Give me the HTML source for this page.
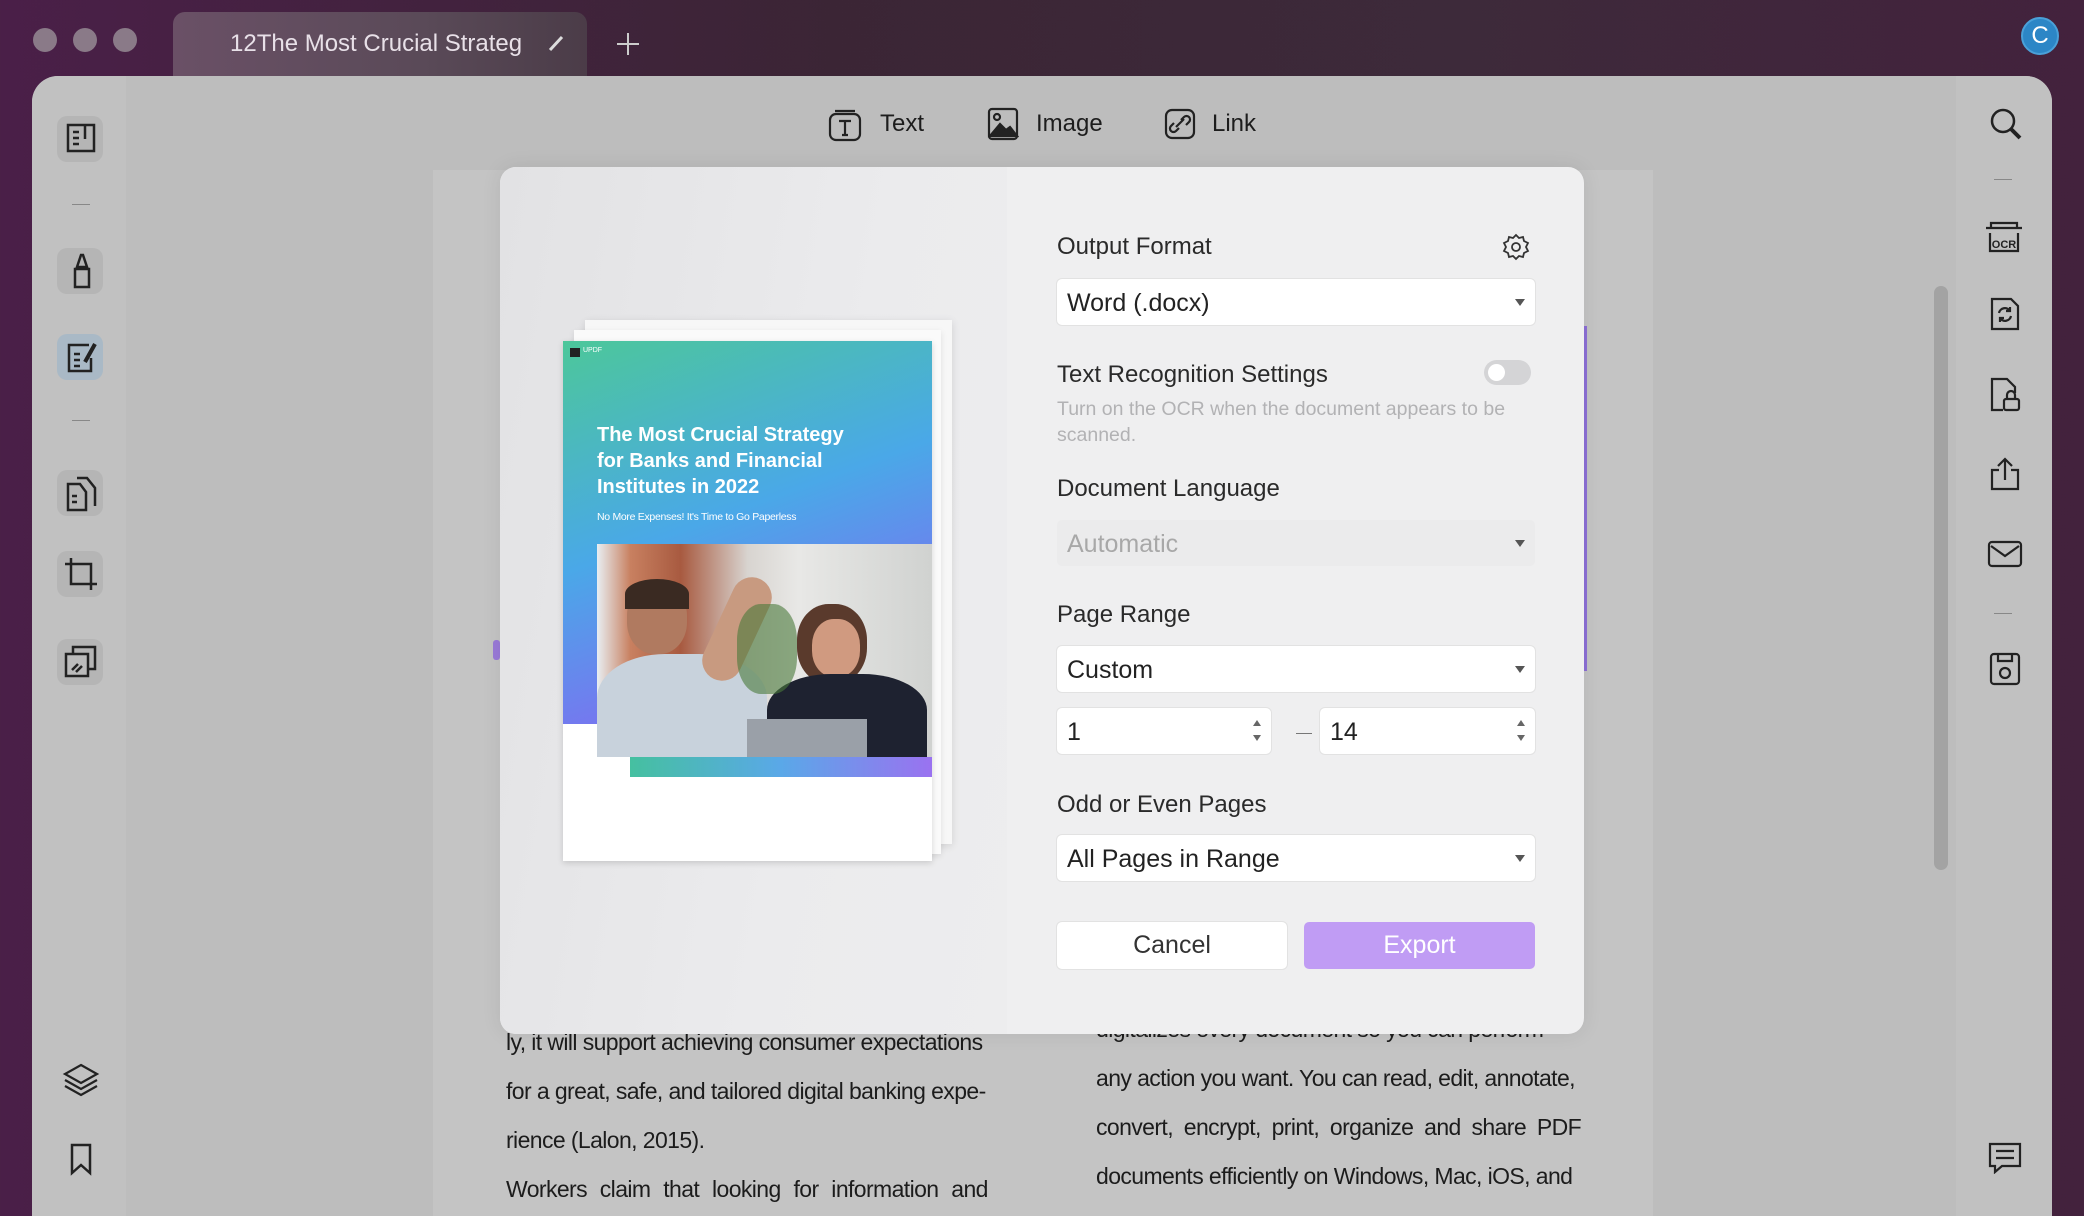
<!DOCTYPE html>
<html><head><meta charset="utf-8"><style>
*{margin:0;padding:0;box-sizing:border-box}
body{width:2084px;height:1208px;overflow:hidden;background:linear-gradient(90deg,#4a1f48 0%,#3b2535 40%,#3d2a3a 70%,#43223d 100%);font-family:"Liberation Sans",sans-serif;position:relative}
.abs{position:absolute}
.dot{position:absolute;top:28px;width:24px;height:24px;border-radius:50%;background:#8a7a88}
.tab{left:173px;top:12px;width:414px;height:66px;border-radius:12px 12px 0 0;background:linear-gradient(90deg,#6a5066,#5a4a58 60%,#4b3c48);}
.main{left:32px;top:76px;width:2020px;height:1140px;border-radius:26px 26px 0 0;background:#bdbdbd;overflow:hidden}
.lsb{left:0;top:0;width:94px;height:1140px;background:#c1c1c1}
.rsb{right:0;top:0;width:96px;height:1140px;background:#c1c1c1}
.ib{position:absolute;width:46px;height:46px;border-radius:10px;background:#b5b5b5}
.dlg{left:500px;top:167px;width:1084px;height:867px;border-radius:16px;background:#efeff0;overflow:hidden;box-shadow:0 0 20px rgba(0,0,0,.08)}
.lab{position:absolute;left:557px;font-size:24px;color:#2a2a2a}
.sel{position:absolute;left:557px;width:478px;height:46px;background:#fff;border-radius:5px;font-size:25px;color:#222;padding:10px 10px;box-shadow:0 0 0 1px #e2e2e2}
.sel:after{content:"";position:absolute;right:10px;top:20px;border:5px solid transparent;border-top:7px solid #555}
.doc{font-size:23px;color:#1c1c1c;position:absolute;letter-spacing:-.6px;white-space:nowrap}
</style></head><body>
<div class="dot" style="left:33px"></div><div class="dot" style="left:73px"></div><div class="dot" style="left:113px"></div>
<div class="abs tab"></div>
<div class="abs" style="left:230px;top:30px;font-size:24px;color:#e8e0e8;width:300px;overflow:hidden;white-space:nowrap">12The Most Crucial Strateg</div>
<svg class="abs" style="left:547px;top:34px" width="18" height="18"><path d="M3 16L15 3" stroke="#ddd" stroke-width="3"/></svg>
<svg class="abs" style="left:616px;top:32px" width="24" height="24"><path d="M12 1V23M1 12H23" stroke="#ccc" stroke-width="2"/></svg>
<div class="abs" style="left:2021px;top:17px;width:38px;height:38px;border-radius:50%;background:#2c86c6;border:2px solid #4aa0d8;color:#fff;font-size:24px;text-align:center;line-height:34px">C</div>

<div class="abs main">
 <div class="abs lsb"></div>
 <div class="abs rsb"></div>
 <div class="abs" style="left:401px;top:94px;width:1220px;height:1060px;background:#c4c4c4"></div>
 <div class="abs" style="left:1902px;top:210px;width:14px;height:584px;border-radius:7px;background:#a3a3a3"></div>
 <div class="ib" style="left:25px;top:40px"></div>
 <svg class="abs" style="left:33px;top:46px" width="32" height="34" fill="none" stroke="#222" stroke-width="2.5"><rect x="3" y="3" width="26" height="26"/><path d="M8 10h6M8 16h6M8 22h6M20 3v14"/></svg>
 <div class="abs" style="left:40px;top:128px;width:18px;height:1px;background:#888"></div>
 <div class="ib" style="left:25px;top:172px"></div>
 <svg class="abs" style="left:35px;top:175px" width="28" height="40" fill="none" stroke="#222" stroke-width="2.5"><path d="M14 4L10 16h10L16 4zM8 18h14v18H8z"/></svg>
 <div class="ib" style="left:25px;top:258px;background:#a9b9c6"></div>
 <svg class="abs" style="left:33px;top:264px" width="34" height="34" fill="none" stroke="#222" stroke-width="2.5"><path d="M24 5H4v26h22V18M9 14h6M9 20h6M9 26h6"/><path d="M30 4L20 22" stroke-width="4"/></svg>
 <div class="abs" style="left:40px;top:344px;width:18px;height:1px;background:#888"></div>
 <div class="ib" style="left:25px;top:394px"></div>
 <svg class="abs" style="left:33px;top:398px" width="34" height="38" fill="none" stroke="#222" stroke-width="2.5"><path d="M3 10h12l6 8v18H3zM12 4h10l8 10v18M7 22h5M7 28h5"/></svg>
 <div class="ib" style="left:25px;top:475px"></div>
 <svg class="abs" style="left:31px;top:480px" width="36" height="36" fill="none" stroke="#222" stroke-width="2.5"><path d="M8 2v26h26M2 8h26v26"/></svg>
 <div class="ib" style="left:25px;top:563px"></div>
 <svg class="abs" style="left:31px;top:568px" width="36" height="36" fill="none" stroke="#222" stroke-width="2.5"><rect x="10" y="3" width="22" height="22"/><rect x="3" y="10" width="22" height="22" fill="#bbb"/><path d="M9 26l6-6M13 28l6-6"/></svg>
 <svg class="abs" style="left:30px;top:985px" width="38" height="38" fill="none" stroke="#222" stroke-width="2.2"><path d="M19 4L35 13 19 22 3 13z"/><path d="M3 19l16 9 16-9M3 25l16 9 16-9"/></svg>
 <svg class="abs" style="left:35px;top:1066px" width="28" height="34" fill="none" stroke="#222" stroke-width="2.5"><path d="M5 3h18v28l-9-8-9 8z"/></svg>
 <svg class="abs" style="left:796px;top:32px" width="34" height="34" fill="none" stroke="#222" stroke-width="2.2"><rect x="2" y="6" width="30" height="26" rx="6"/><path d="M7 3h20M11 13h12M17 13v14M14 27h6"/></svg>
 <div class="abs" style="left:848px;top:34px;font-size:24px;color:#1d1d1d">Text</div>
 <svg class="abs" style="left:955px;top:30px" width="32" height="36" fill="none" stroke="#222" stroke-width="2.2"><rect x="2" y="3" width="28" height="30" rx="3"/><circle cx="10" cy="11" r="3"/><path d="M3 30l10-12 6 6 4-3 7 9z" fill="#222"/></svg>
 <div class="abs" style="left:1004px;top:34px;font-size:24px;color:#1d1d1d">Image</div>
 <svg class="abs" style="left:1132px;top:32px" width="32" height="32" fill="none" stroke="#222" stroke-width="2.2"><rect x="2" y="2" width="28" height="28" rx="6"/><path d="M12 19l8-8M10 15l-3 3a3 3 0 005 5l3-3M22 17l3-3a3 3 0 00-5-5l-3 3"/></svg>
 <div class="abs" style="left:1180px;top:34px;font-size:24px;color:#1d1d1d">Link</div>
 <svg class="abs" style="left:1956px;top:30px" width="36" height="36" fill="none" stroke="#222" stroke-width="2.5"><circle cx="15" cy="15" r="11"/><path d="M23 23l9 9" stroke-width="4"/></svg>
 <div class="abs" style="left:1962px;top:103px;width:18px;height:1px;background:#888"></div>
 <svg class="abs" style="left:1953px;top:143px" width="38" height="36" fill="none" stroke="#222" stroke-width="2.2"><path d="M1 9h36M6 9V4h26v5M5 14v18h28V14"/><text x="19" y="29" font-size="11" font-family="Liberation Sans" font-weight="bold" text-anchor="middle" fill="#222" stroke="none">OCR</text></svg>
 <svg class="abs" style="left:1957px;top:220px" width="32" height="36" fill="none" stroke="#222" stroke-width="2.2"><path d="M3 3h19l7 7v23H3z"/><path d="M10 17a6 6 0 0111-2M22 20a6 6 0 01-11 2M21 11v4h-4M11 26v-4h4"/></svg>
 <svg class="abs" style="left:1957px;top:300px" width="32" height="38" fill="none" stroke="#222" stroke-width="2.2"><path d="M14 34H3V3h15l8 8v6"/><rect x="15" y="23" width="15" height="11" rx="2"/><path d="M18 23v-4a4 4 0 018 0v4"/></svg>
 <svg class="abs" style="left:1957px;top:380px" width="32" height="36" fill="none" stroke="#222" stroke-width="2.2"><path d="M10 14H3v19h26V14h-7M16 24V3M9 10l7-7 7 7"/></svg>
 <svg class="abs" style="left:1955px;top:464px" width="36" height="28" fill="none" stroke="#222" stroke-width="2.2"><rect x="2" y="2" width="32" height="24" rx="3"/><path d="M4 6l14 10 14-10"/></svg>
 <div class="abs" style="left:1962px;top:537px;width:18px;height:1px;background:#888"></div>
 <svg class="abs" style="left:1957px;top:576px" width="32" height="34" fill="none" stroke="#222" stroke-width="2.2"><rect x="2" y="2" width="28" height="30" rx="3"/><path d="M9 2v7h14V2"/><circle cx="16" cy="21" r="5"/></svg>
 <svg class="abs" style="left:1956px;top:1066px" width="34" height="32" fill="none" stroke="#222" stroke-width="2.2"><path d="M2 2h30v22H14l-7 6v-6H2z"/><path d="M8 9h18M8 16h18"/></svg>
 <div class="doc" style="left:474px;top:953px">ly, it will support achieving consumer expectations</div>
 <div class="doc" style="left:474px;top:1002px">for a great, safe, and tailored digital banking expe-</div>
 <div class="doc" style="left:474px;top:1051px">rience (Lalon, 2015).</div>
 <div class="doc" style="left:474px;top:1100px;word-spacing:7px">Workers claim that looking for information and</div>
 <div class="doc" style="left:1064px;top:940px">digitalizes every document so you can perform</div>
 <div class="doc" style="left:1064px;top:989px">any action you want. You can read, edit, annotate,</div>
 <div class="doc" style="left:1064px;top:1038px;word-spacing:5px">convert, encrypt, print, organize and share PDF</div>
 <div class="doc" style="left:1064px;top:1087px">documents efficiently on Windows, Mac, iOS, and</div>
 <div class="abs" style="left:1552px;top:250px;width:3px;height:345px;background:#8c6fd6"></div>
 <div class="abs" style="left:461px;top:564px;width:7px;height:20px;border-radius:3px;background:#9a7ad8"></div>
</div>

<div class="abs dlg">
 <div class="abs" style="left:0;top:0;width:507px;height:867px;background:linear-gradient(100deg,#e2e2e4,#ebebed 60%,#ededee)"></div>
 <div class="abs" style="left:85px;top:153px;width:367px;height:524px;background:#f7f7f7;box-shadow:0 2px 8px rgba(0,0,0,.12)"></div>
 <div class="abs" style="left:74px;top:163px;width:367px;height:524px;background:#fafafa;box-shadow:0 2px 6px rgba(0,0,0,.1)"></div>
 <div class="abs" style="left:63px;top:174px;width:369px;height:520px;background:#fff;box-shadow:0 2px 6px rgba(0,0,0,.15)"></div>
 <div class="abs" style="left:63px;top:174px;width:369px;height:383px;background:linear-gradient(160deg,#4cc79a 0%,#4aa8e8 45%,#7a72f0 80%,#9a6ef0 100%)"></div>
 <div class="abs" style="left:70px;top:181px;width:10px;height:9px;background:#222"></div>
 <div class="abs" style="left:83px;top:180px;font-size:7px;color:#fff">UPDF</div>
 <div class="abs" style="left:97px;top:255px;font-size:20px;font-weight:bold;color:#fff;line-height:26px">The Most Crucial Strategy<br>for Banks and Financial<br>Institutes in 2022</div>
 <div class="abs" style="left:97px;top:344px;font-size:10.5px;color:#fff;letter-spacing:-.3px">No More Expenses! It's Time to Go Paperless</div>
 <div class="abs" style="left:130px;top:589px;width:302px;height:21px;background:linear-gradient(90deg,#45c0a0,#5aa8e8,#9a72f0)"></div>
 <div class="abs" style="left:97px;top:377px;width:335px;height:213px;background:linear-gradient(90deg,#e8eef2 0%,#c88060 10%,#a85a40 25%,#d8d4d0 45%,#e8e8e6 60%,#d0d2d0 100%);overflow:hidden">
  <div class="abs" style="left:30px;top:40px;width:60px;height:70px;border-radius:45%;background:#b07a60"></div>
  <div class="abs" style="left:28px;top:35px;width:64px;height:30px;border-radius:50% 50% 0 0;background:#3a2a22"></div>
  <div class="abs" style="left:0;top:110px;width:170px;height:110px;border-radius:40% 40% 0 0;background:#c8d2dc"></div>
  <div class="abs" style="left:120px;top:30px;width:40px;height:110px;transform:rotate(25deg);background:#c89a80;border-radius:20px"></div>
  <div class="abs" style="left:200px;top:60px;width:70px;height:80px;border-radius:45%;background:#5a3a2c"></div>
  <div class="abs" style="left:215px;top:75px;width:48px;height:58px;border-radius:45%;background:#d09a80"></div>
  <div class="abs" style="left:170px;top:130px;width:160px;height:90px;border-radius:40% 40% 0 0;background:#1e2230"></div>
  <div class="abs" style="left:140px;top:60px;width:60px;height:90px;background:#4a7a3a;border-radius:40%;opacity:.6"></div>
  <div class="abs" style="left:150px;top:175px;width:120px;height:40px;background:#9aa0a8"></div>
 </div>
 <div class="lab" style="top:66px">Output Format</div>
 <svg class="abs" style="left:1002px;top:66px" width="28" height="28" fill="none" stroke="#333" stroke-width="1.8"><circle cx="14" cy="14" r="4"/><path d="M14 2l3 3 4-1 1 4 4 2-2 4 2 4-4 2-1 4-4-1-3 3-3-3-4 1-1-4-4-2 2-4-2-4 4-2 1-4 4 1z"/></svg>
 <div class="sel" style="top:112px">Word (.docx)</div>
 <div class="lab" style="top:194px">Text Recognition Settings</div>
 <div class="abs" style="left:984px;top:193px;width:47px;height:25px;border-radius:13px;background:#d4d4d6"><div class="abs" style="left:4px;top:4px;width:17px;height:17px;border-radius:50%;background:#fff"></div></div>
 <div class="abs" style="left:557px;top:229px;font-size:19.5px;color:#b2b2b4;line-height:26px;width:455px">Turn on the OCR when the document appears to be scanned.</div>
 <div class="lab" style="top:308px">Document Language</div>
 <div class="sel" style="top:353px;background:#ebebec;color:#a8a8a8;box-shadow:none">Automatic</div>
 <div class="lab" style="top:434px">Page Range</div>
 <div class="sel" style="top:479px">Custom</div>
 <div class="sel" style="top:541px;width:214px">1</div>
 <div class="abs" style="left:796px;top:566px;width:16px;height:1px;background:#777"></div>
 <div class="sel" style="top:541px;left:820px;width:215px">14</div>
 <div class="lab" style="top:624px">Odd or Even Pages</div>
 <div class="sel" style="top:668px">All Pages in Range</div>
 <div class="abs" style="left:557px;top:755px;width:230px;height:47px;background:#fff;border-radius:5px;box-shadow:0 0 0 1px #e2e2e2;font-size:25px;color:#333;text-align:center;line-height:47px">Cancel</div>
 <div class="abs" style="left:804px;top:755px;width:231px;height:47px;background:#c09cf4;border-radius:5px;font-size:25px;color:#fff;text-align:center;line-height:47px">Export</div>
</div>
<style>
.dlg .sel[style*="top:541px"]:after{border:4px solid transparent;border-bottom:6px solid #666;top:8px;right:10px}
.dlg .sel[style*="top:541px"]:before{content:"";position:absolute;right:10px;top:27px;border:4px solid transparent;border-top:6px solid #666}
</style>
</body></html>
